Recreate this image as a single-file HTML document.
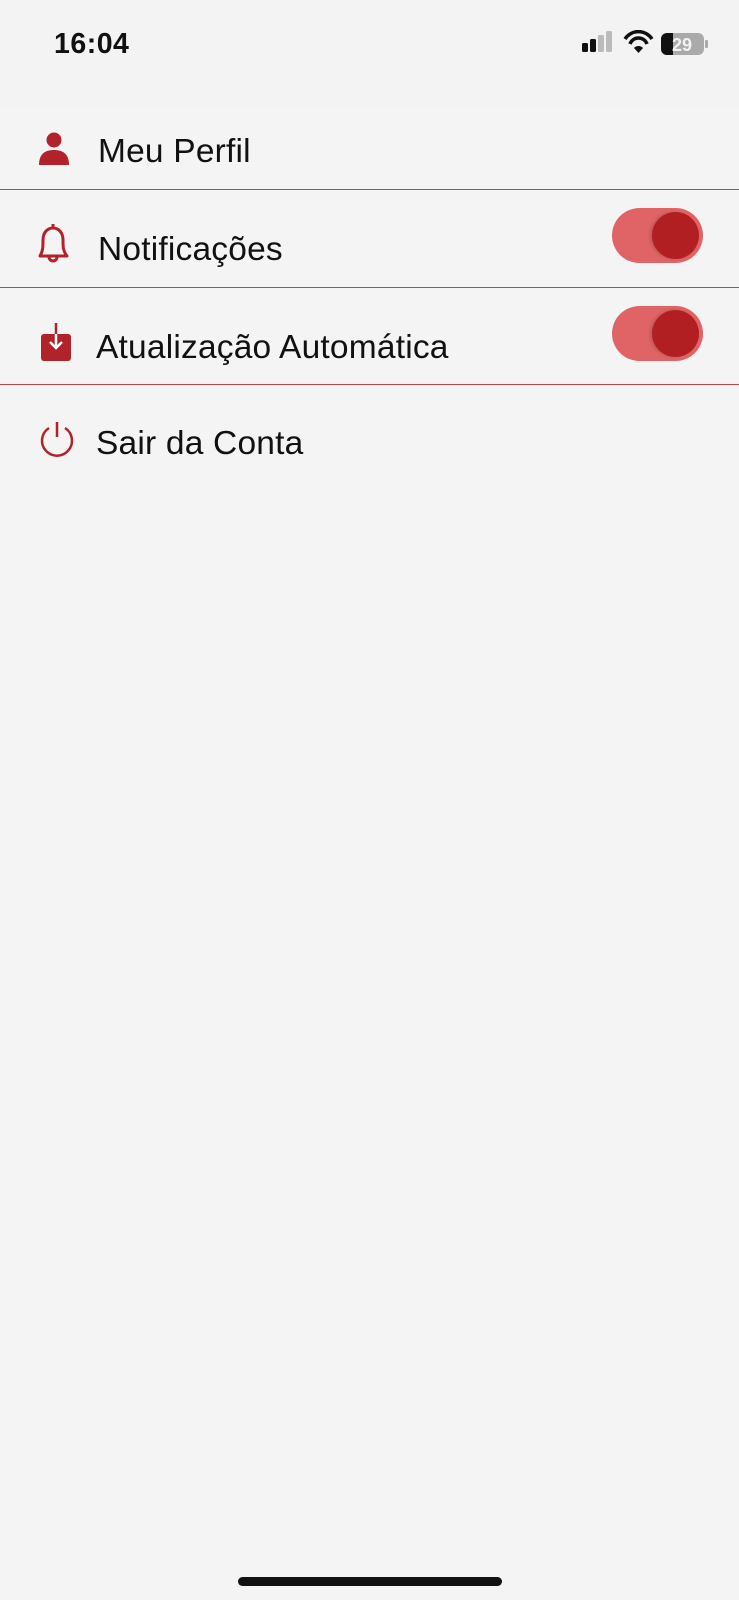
<!DOCTYPE html>
<html><head><meta charset="utf-8"><style>
*{margin:0;padding:0;box-sizing:border-box}
body{width:739px;height:1600px;background:#f3f3f3;font-family:"Liberation Sans",sans-serif;position:relative;overflow:hidden}
.abs{position:absolute}
.time{left:54px;top:28px;font-size:28.5px;font-weight:bold;color:#111;letter-spacing:0.5px}
.band{left:0;top:108px;width:739px;height:1492px;background:#f4f4f4}
.line{left:0;width:739px;height:1px;background:#b8454a}
.txt{font-size:33.5px;color:#111;letter-spacing:0.2px}
.tog{left:612px;width:91px;height:55px;border-radius:28px;background:#e06466}
.tog::after{content:"";position:absolute;right:4px;top:4px;width:47px;height:47px;border-radius:50%;background:#b21f22;box-shadow:-2px 0 3px rgba(0,0,0,.15)}
</style></head><body>
<div class="abs band"></div>
<div class="abs time">16:04</div>
<svg class="abs" style="left:580px;top:30px" width="130" height="28" viewBox="0 0 130 28">
<rect x="2" y="13" width="6" height="9" rx="1.5" fill="#111"/>
<rect x="10" y="9" width="6" height="13" rx="1.5" fill="#111"/>
<rect x="18" y="5" width="6" height="17" rx="1.5" fill="#bbb"/>
<rect x="26" y="1" width="6" height="21" rx="1.5" fill="#bbb"/>
<path d="M45 9 A16 16 0 0 1 72 9" stroke="#111" stroke-width="3.5" fill="none"/>
<path d="M50 14 A9 9 0 0 1 67 14" stroke="#111" stroke-width="3.5" fill="none"/>
<path d="M54 18 L58.5 23 L63 18 A6 6 0 0 0 54 18Z" fill="#111"/>
<rect x="81" y="3" width="43" height="22" rx="6" fill="#aaa"/>
<path d="M87 3 H93 V25 H87 A6 6 0 0 1 81 19 V9 A6 6 0 0 1 87 3Z" fill="#111"/>
<text x="102" y="21" font-size="18" font-weight="bold" fill="#f2f2f2" text-anchor="middle" font-family="Liberation Sans">29</text>
<rect x="125" y="10" width="3" height="8" rx="1" fill="#aaa"/>
</svg>
<svg class="abs" style="left:38px;top:132px" width="34" height="34" viewBox="0 0 34 34">
<circle cx="16" cy="8" r="7.5" fill="#b2222a"/>
<path d="M1 33 C1 22 7 18 16 18 C25 18 31 22 31 33Z" fill="#b2222a"/>
</svg>
<div class="abs txt" style="left:98px;top:133px">Meu Perfil</div>
<div class="abs line" style="top:189px"></div>
<svg class="abs" style="left:34px;top:221px" width="40" height="44" viewBox="0 0 40 44">
<path d="M19 3 V6 M6 35 C9 30 9 26 9 19 C9 12 13 7 19 7 C25 7 29 12 29 19 C29 26 29 30 33 35 Z M15 36 A4 4 0 0 0 23 36" stroke="#b2222a" stroke-width="3" fill="none" stroke-linejoin="round"/>
</svg>
<div class="abs txt" style="left:98px;top:231px">Notificações</div>
<div class="abs tog" style="top:208px"></div>
<div class="abs line" style="top:287px"></div>
<svg class="abs" style="left:40px;top:322px" width="32" height="40" viewBox="0 0 32 40">
<rect x="1" y="12" width="30" height="27" rx="3" fill="#b2222a"/>
<path d="M16 1 V26 M10 20 L16 26 L22 20" stroke="#b2222a" stroke-width="2.5" fill="none"/>
<path d="M16 12 V26 M10 20 L16 26 L22 20" stroke="#fff" stroke-width="2.5" fill="none"/>
</svg>
<div class="abs txt" style="left:96px;top:329px">Atualização Automática</div>
<div class="abs tog" style="top:306px"></div>
<div class="abs line" style="top:384px"></div>
<svg class="abs" style="left:38px;top:420px" width="38" height="38" viewBox="0 0 38 38">
<path d="M11 8 A15 15 0 1 0 27 8" stroke="#b2222a" stroke-width="2.5" fill="none"/>
<path d="M19 2 V17" stroke="#b2222a" stroke-width="2.5"/>
</svg>
<div class="abs txt" style="left:96px;top:425px">Sair da Conta</div>
<div class="abs" style="left:238px;top:1577px;width:264px;height:9px;border-radius:5px;background:#111"></div>
</body></html>
